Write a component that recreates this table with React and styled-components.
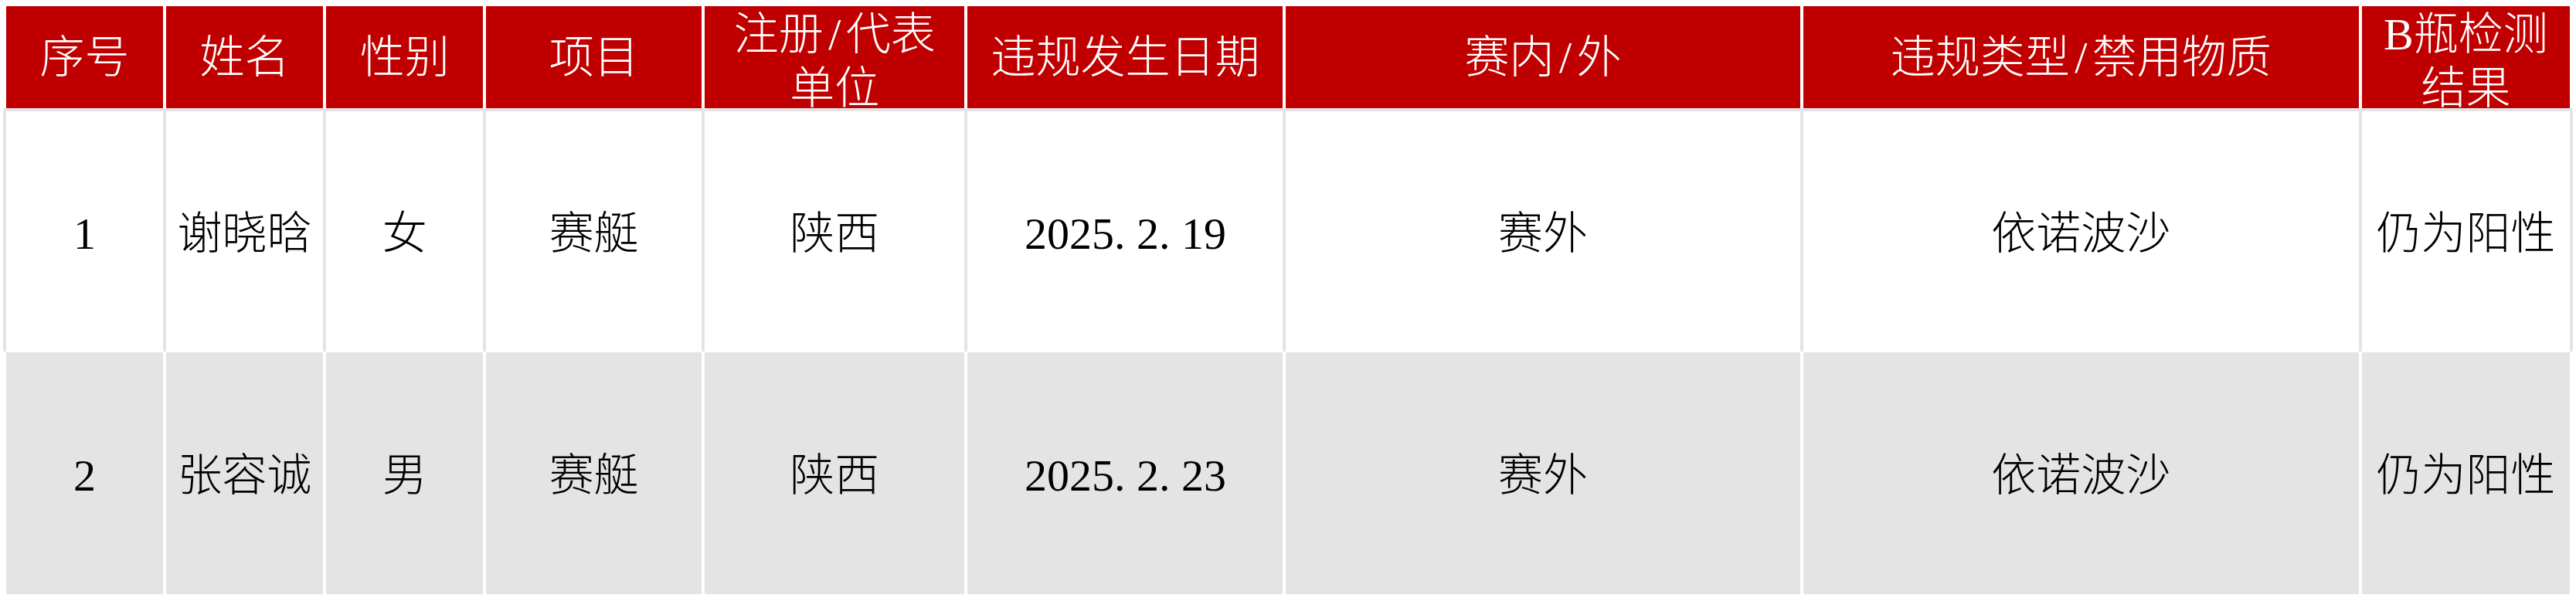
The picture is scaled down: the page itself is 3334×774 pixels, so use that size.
import React from "react";
import styled, { createGlobalStyle } from "styled-components";

const GlobalStyle = createGlobalStyle`
  html, body {
    margin: 0;
    padding: 0;
    background: #ffffff;
  }
  body {
    font-family: "Liberation Serif", "Noto Sans CJK SC", serif;
  }
`;

const COLS = "203fr 203fr 203fr 279fr 336fr 408fr 665fr 719fr 269fr";

const Page = styled.div`
  padding: 8px;
  width: 3334px;
  box-sizing: border-box;
`;

const Table = styled.div`
  display: flex;
  flex-direction: column;
`;

const HeaderRow = styled.div`
  display: grid;
  grid-template-columns: ${COLS};
  column-gap: 4px;
  height: 132px;
  background: #ffffff;
`;

const HeaderCell = styled.div`
  background: #c00000;
  color: #ffffff;
  font-size: 58px;
  font-weight: 300;
  line-height: 70px;
  text-align: center;
  display: flex;
  align-items: safe center;
  justify-content: center;
  padding: 2px 6px 0;
  box-sizing: border-box;
  overflow: hidden;
  white-space: nowrap;
`;

const BodyRow = styled.div`
  display: grid;
  grid-template-columns: ${COLS};
  column-gap: 4px;
  background: ${(p) => (p.$odd ? "#e4e4e4" : "#ffffff")};
  margin: ${(p) => (p.$odd ? "0 -4px" : "1px 0 0")};
  padding: ${(p) => (p.$odd ? "4px 4px 0" : "0")};
`;

const Cell = styled.div`
  background: ${(p) => (p.$odd ? "#ffffff" : "#e4e4e4")};
  height: ${(p) => p.$h}px;
  color: #000000;
  font-size: 58px;
  font-weight: 300;
  line-height: 70px;
  display: flex;
  align-items: center;
  justify-content: center;
  padding-top: 6px;
  box-sizing: border-box;
  white-space: nowrap;
`;

const Half = styled.span`
  display: inline-block;
  width: 0.5em;
  text-align: ${(p) => p.$align || "center"};
`;

const withHalf = (text) => {
  const parts = [];
  let buf = "";
  [...text].forEach((ch, i) => {
    if (ch === "/" || ch === ".") {
      if (buf) parts.push(buf);
      buf = "";
      parts.push(
        <Half key={i} $align={ch === "." ? "left" : "center"}>
          {ch}
        </Half>
      );
    } else {
      buf += ch;
    }
  });
  if (buf) parts.push(buf);
  return parts;
};

const headers = [
  ["序号"],
  ["姓名"],
  ["性别"],
  ["项目"],
  ["注册/代表", "单位"],
  ["违规发生日期"],
  ["赛内/外"],
  ["违规类型/禁用物质"],
  ["B瓶检测", "结果"],
];

const rows = [
  ["1", "谢晓晗", "女", "赛艇", "陕西", "2025.2.19", "赛外", "依诺波沙", "仍为阳性"],
  ["2", "张容诚", "男", "赛艇", "陕西", "2025.2.23", "赛外", "依诺波沙", "仍为阳性"],
];

export default function App() {
  return (
    <>
      <GlobalStyle />
      <Page>
        <Table>
          <HeaderRow>
            {headers.map((lines, i) => (
              <HeaderCell key={i}>
                <div>
                  {lines.map((l, j) => (
                    <div key={j}>{withHalf(l)}</div>
                  ))}
                </div>
              </HeaderCell>
            ))}
          </HeaderRow>
          {rows.map((r, ri) => {
            const odd = ri % 2 === 0;
            return (
              <BodyRow key={ri} $odd={odd}>
                {r.map((v, ci) => (
                  <Cell key={ci} $odd={odd} $h={odd ? 311 : 313}>
                    {withHalf(v)}
                  </Cell>
                ))}
              </BodyRow>
            );
          })}
        </Table>
      </Page>
    </>
  );
}
